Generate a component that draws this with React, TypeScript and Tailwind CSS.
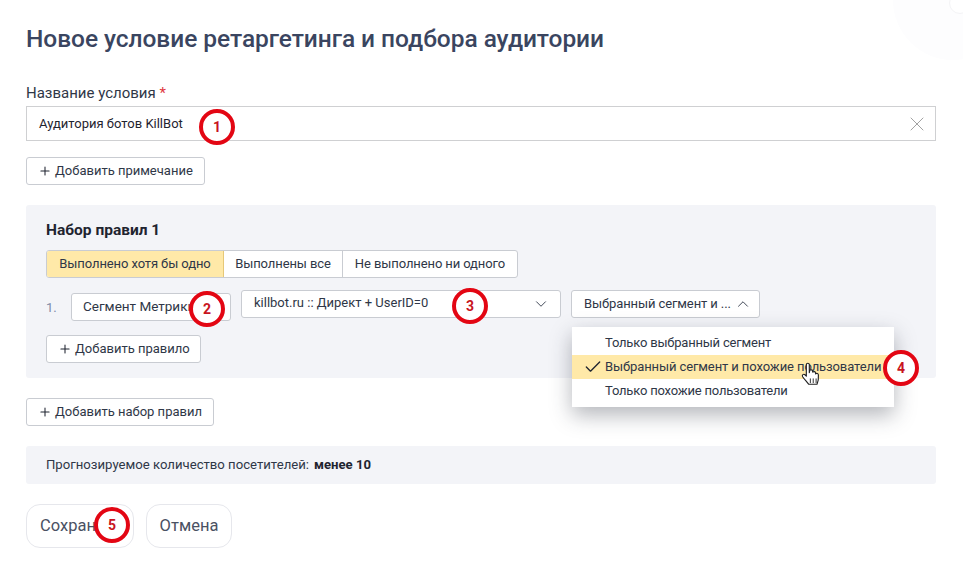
import { Check, ChevronDown, ChevronUp, Plus, X } from 'lucide-react'

const font = { fontFamily: 'Roboto, "Noto Sans", sans-serif' }

const Marker = ({ n, className }: { n: number; className: string }) => (
  <div
    className={`absolute z-30 flex h-[36px] w-[36px] items-center justify-center rounded-full border-[4px] border-[#e30613] bg-white text-[14px] font-bold text-[#c8141e] ${className}`}
  >
    {n}
  </div>
)

const AddButton = ({ label, className = '' }: { label: string; className?: string }) => (
  <button className={`flex h-[28px] items-center gap-[3px] rounded-[3px] border border-[#c9ccd2] bg-white pl-[11px] text-[13px] whitespace-nowrap text-[#2f3747] ${className}`}>
    <Plus size={14} strokeWidth={1.8} className="text-[#1f2430]" />
    {label}
  </button>
)

const HandCursor = () => (
  <svg viewBox="0 0 20 24" className="absolute top-[34px] left-[228px] z-20 h-[28px] w-[23px]">
    <path
      d="M5.5 3c0-1.6 2.6-1.6 2.6 0v7l.4-2c1-.9 2.3-.6 2.4.6l.2 1c.8-.9 2.2-.6 2.400.6l.1.8c.9-.7 2.300-.3 2.400 1 .2 3-.2 6-1.200 8H7.500C6 18 3.700 15.500 2.300 13.500c-.9-1.400.8-2.800 2-1.700l1.200 1.200V3z"
      fill="white"
      stroke="#222"
      strokeWidth="1"
      strokeLinejoin="round"
    />
    <path d="M9 15v4M11.500 15v4M14 15v4" stroke="#222" strokeWidth="0.800" />
  </svg>
)

export default function App() {
  return (
    <div className="relative h-[575px] w-[963px] overflow-hidden bg-white px-[26px] text-[#2f3747]" style={font}>
      {/* faint corner decoration */}
      <div className="absolute -top-[60px] -right-[50px] h-[120px] w-[120px] rounded-full bg-[#fdfdfe]" />
      <div className="absolute -top-[8px] -right-[8px] h-[22px] w-[22px] rounded-full border border-[#f4f4f6] bg-white" />

      <h1 className="relative pt-[24px] text-[24.500px] leading-[30px] font-medium tracking-[-0.05px] whitespace-nowrap text-[#3a4560]">
        Новое условие ретаргетинга и подбора аудитории
      </h1>

      <div className="mt-[30px] text-[15px] leading-[18px] text-[#2f3747]">
        Название условия <span className="text-[#e0383e]">*</span>
      </div>

      <div className="relative mt-[4px] flex h-[35px] w-[910px] items-center justify-between border border-[#cfd0d2] pr-[6px] pl-[12px] text-[13px] text-[#1f2430]">
        Аудитория ботов KillBot
        <X size={24} strokeWidth={0.8} className="text-[#8a8a8a]" />
      </div>

      <AddButton label="Добавить примечание" className="mt-[16px] w-[179px]" />

      <div className="mt-[20px] h-[173px] w-[910px] rounded-[3px] bg-[#f3f4f8] px-[20px] pt-[15px]">
        <div className="text-[15.500px] leading-[20px] font-bold text-[#1f2430]">Набор правил 1</div>

        <div className="mt-[10px] flex h-[28px] w-[472px] overflow-hidden rounded-[3px] border border-[#c9ccd2] bg-white text-[13px] tracking-[-0.1px] whitespace-nowrap">
          <div className="flex w-[177px] items-center justify-center border-r border-[#e6c878] bg-[#ffe9a8]">Выполнено хотя бы одно</div>
          <div className="flex w-[119px] items-center justify-center border-r border-[#c9ccd2]">Выполнены все</div>
          <div className="flex flex-1 items-center justify-center">Не выполнено ни одного</div>
        </div>

        <div className="relative mt-[15px] flex items-start whitespace-nowrap">
          <span className="mt-[5px] w-[25px] text-[13px] text-[#7f8ba8]">1.</span>
          <div className="flex h-[28px] w-[160px] items-center rounded-[3px] border border-[#c9ccd2] bg-white pb-[1px] pl-[11px] text-[13.500px]">Сегмент Метрики</div>
          <div className="-mt-[3px] ml-[10px] flex h-[28px] w-[320px] items-center justify-between rounded-[3px] border border-[#c9ccd2] bg-white pr-[10px] pl-[12px] text-[13px]">
            <span className="-mt-[2px]">killbot.ru :: Директ + UserID=0</span>
            <ChevronDown size={18} strokeWidth={1.200} />
          </div>
          <div className="-mt-[3px] ml-[10px] flex h-[28px] w-[189px] items-center justify-between rounded-[3px] border border-[#c9ccd2] bg-white pr-[7px] pl-[12px] text-[13px] tracking-[-0.1px]">
            Выбранный сегмент и ...
            <ChevronUp size={18} strokeWidth={1.200} />
          </div>

          {/* dropdown */}
          <div className="absolute top-[34px] left-[526px] z-10 w-[322px] bg-white pt-[3px] pb-[4px] text-[13px] tracking-[-0.2px] shadow-[0_8px_20px_rgba(40,45,60,0.35)]">
            <div className="flex h-[25px] items-center pl-[33px]">Только выбранный сегмент</div>
            <div className="relative flex h-[24px] items-center bg-[#ffe9a8] pl-[33px] tracking-[-0.1px]">
              <Check size={20} strokeWidth={1.600} className="absolute left-[11px] text-[#1f2430]" />
              Выбранный сегмент и похожие пользователи
            </div>
            <div className="flex h-[24px] items-center pl-[33px]">Только похожие пользователи</div>
            <HandCursor />
          </div>
        </div>

        <AddButton label="Добавить правило" className="mt-[14px] w-[155px]" />
      </div>

      <AddButton label="Добавить набор правил" className="mt-[20px] w-[188px]" />

      <div className="mt-[20px] flex h-[38px] w-[910px] items-center rounded-[3px] bg-[#f3f4f8] pl-[20px] text-[13.150px] text-[#2f3747]">
        Прогнозируемое количество посетителей:
        <b className="ml-[5px] font-bold text-[#1f2430]">менее 10</b>
      </div>

      <div className="mt-[20px] flex gap-[12px] text-[16.500px] text-[#4a5163]">
        <button className="h-[44px] w-[108px] rounded-[14px] border border-[#e6e7ec] pl-[13px] text-left whitespace-nowrap">Сохран</button>
        <button className="h-[44px] w-[86px] rounded-[14px] border border-[#e6e7ec]">Отмена</button>
      </div>

      <Marker n={1} className="top-[109px] left-[199px]" />
      <Marker n={2} className="top-[291px] left-[189px]" />
      <Marker n={3} className="top-[288px] left-[452px]" />
      <Marker n={4} className="top-[350px] left-[883px]" />
      <Marker n={5} className="top-[507px] left-[94px]" />
    </div>
  )
}
